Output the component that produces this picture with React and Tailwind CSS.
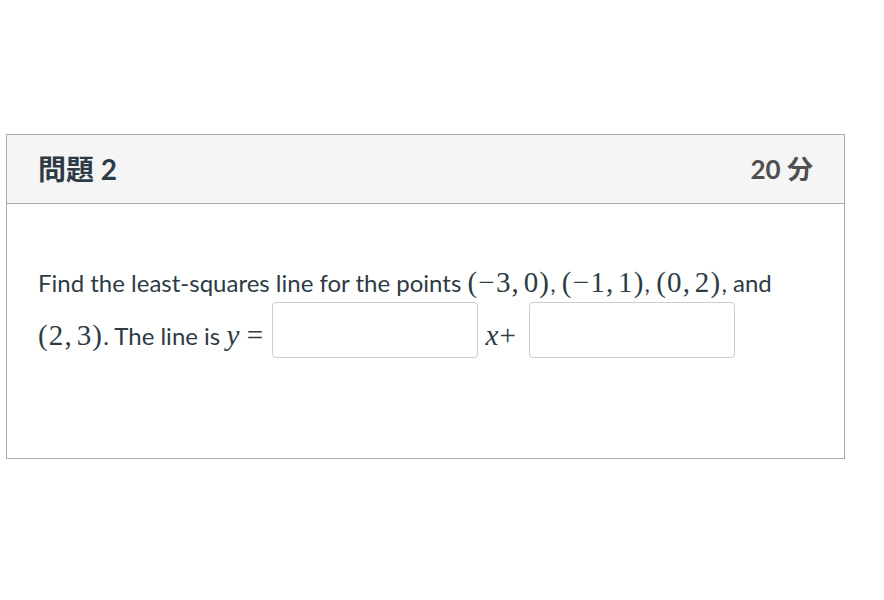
import React from "react";

function M({ children, italic, className = "" }) {
  return (
    <span
      className={`font-['Liberation_Serif',serif] text-[29px] leading-none tracking-[1.2px] ${italic ? "italic" : ""} ${className}`}
    >
      {children}
    </span>
  );
}

function Blank({ className = "" }) {
  return (
    <span
      className={`inline-block align-[-13px] -mt-[10px] w-[206px] h-[56px] border border-[#c7cdd1] rounded-[4px] bg-white ${className}`}
    />
  );
}

export default function App() {
  return (
    <div className="w-[884px] h-[600px] bg-white pt-[134px] pl-[6px] font-['Lato','Noto_Sans_CJK_JP',sans-serif] text-[#2d3b45]">
      <div className="w-[839px] h-[325px] border border-[#aaaaaa] flex flex-col">
        <div className="h-[69px] bg-[#f5f5f5] border-b border-[#aaaaaa] flex items-center justify-between pl-[31px] pr-[31px]">
          <h2 className="text-[28px] font-bold text-[#2d3b45]">問題 2</h2>
          <div className="text-[26px] font-bold text-[#4f4f4f]">20 分</div>
        </div>
        <div className="pt-[52px] pl-[31px] pr-[31px] text-[24px] leading-[53px]">
          <p>
            Find the least-squares line for the points <M>(−3,&#8202;0)</M>, <M>(−1,&#8202;1)</M>,{" "}
            <M>(0,&#8202;2)</M>, and
            <br />
            <M>(2,&#8202;3)</M>. The line is <M italic>y</M> <M>=</M> <Blank className="ml-[2px]" />{" "}
            <M italic className="ml-[1px]">x</M>
            <M className="mr-[6px]">+</M> <Blank />
          </p>
        </div>
      </div>
    </div>
  );
}
